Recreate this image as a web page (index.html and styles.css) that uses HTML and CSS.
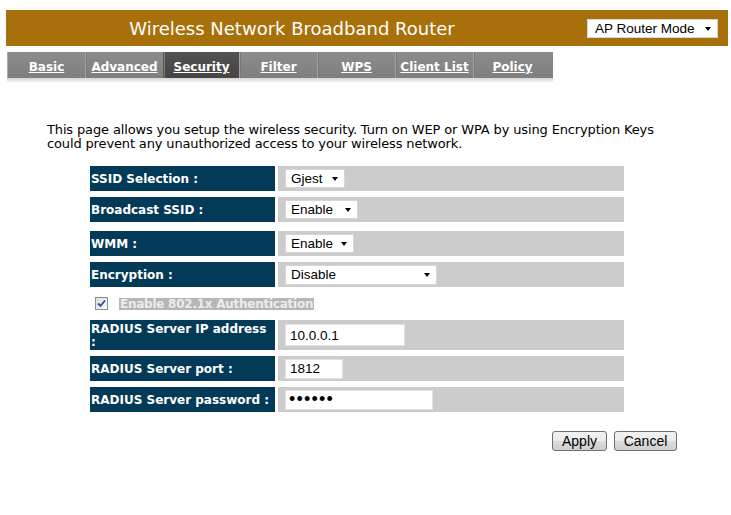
FILE: index.html
```html
<!DOCTYPE html>
<html>
<head lang="en">
    <meta charset="UTF-8">
    <title>Security</title>
    <link rel="stylesheet" href="styles.css">
</head>
<body>
<div class="header">
    <div class="title">Wireless Network Broadband Router</div>
    <div class="sel mode">
        <select>
            <option>AP Router Mode</option>
        </select>
    </div>
</div>
<!--菜单-->
<ul class="tabs">
    <li><a href="#">Basic</a></li>
    <li><a href="#">Advanced</a></li>
    <li class="current"><a href="#">Security</a></li>
    <li><a href="#">Filter</a></li>
    <li><a href="#">WPS</a></li>
    <li><a href="#">Client List</a></li>
    <li><a href="#">Policy</a></li>
</ul>
<div class="tabs-shadow"></div>

<p class="desc">This page allows you setup the wireless security. Turn on WEP or WPA by using Encryption Keys could prevent any unauthorized access to your wireless network.</p>

<div class="form">
    <div class="row">
        <div class="label">SSID Selection :</div>
        <div class="value">
            <div class="sel w60"><select><option>Gjest</option></select></div>
        </div>
    </div>
    <div class="row">
        <div class="label">Broadcast SSID :</div>
        <div class="value">
            <div class="sel w73"><select><option>Enable</option></select></div>
        </div>
    </div>
    <div class="row space">
        <div class="label">WMM :</div>
        <div class="value">
            <div class="sel w69"><select><option>Enable</option></select></div>
        </div>
    </div>
    <div class="row">
        <div class="label">Encryption :</div>
        <div class="value">
            <div class="sel w152 tall"><select><option>Disable</option></select></div>
        </div>
    </div>
    <div class="check-row">
        <span class="cbox">
            <svg width="9" height="9" viewBox="0 0 9 9"><path d="M1 4.5 L3.5 7 L8 1.5" fill="none" stroke="#2b4aa8" stroke-width="1.8"/></svg>
        </span>
        <span class="check-text">Enable 802.1x Authentication</span>
    </div>
    <div class="row big">
        <div class="label">RADIUS Server IP address :</div>
        <div class="value">
            <input class="text w120" type="text" value="10.0.0.1">
        </div>
    </div>
    <div class="row">
        <div class="label">RADIUS Server port :</div>
        <div class="value">
            <input class="text w58" type="text" value="1812">
        </div>
    </div>
    <div class="row">
        <div class="label">RADIUS Server password :</div>
        <div class="value">
            <input class="text pass w148" type="password" value="secret">
        </div>
    </div>
</div>

<div class="actions">
    <button class="btn w55">Apply</button>
    <button class="btn w63">Cancel</button>
</div>
</body>
</html>
```
FILE: styles.css
```css
* {
    margin: 0;
    padding: 0
}

body {
    background-color: #fff;
    font-family: "DejaVu Sans", Verdana, sans-serif;
    font-size: 12px;
    color: #000;
}

ul {
    list-style: none;
}

/* 顶部标题栏 */
.header {
    display: flex;
    align-items: center;
    height: 36px;
    margin: 10px 3px 0 6px;
    background-color: #a8700a;
}

.title {
    width: 572px;
    text-align: center;
    color: #fff;
    font-size: 18px;
}

.header .mode {
    margin-left: 9px;
    width: 131px;
    height: 19px;
}

.header .mode select {
    padding-left: 7px;
}

/* 下拉框 */
.sel {
    position: relative;
    height: 19px;
}

.sel select {
    appearance: none;
    -webkit-appearance: none;
    width: 100%;
    height: 100%;
    padding-left: 5px;
    border: 1px solid #d6d6d6;
    border-radius: 0;
    background-color: #fff;
    font-family: "Liberation Sans", Arial, sans-serif;
    font-size: 13.5px;
    color: #000;
    outline: none;
}

.sel:after {
    content: "";
    position: absolute;
    right: 7px;
    top: 8px;
    border-left: 3.5px solid transparent;
    border-right: 3.5px solid transparent;
    border-top: 4px solid #000;
}

.sel.tall {
    height: 20px;
}

.w60 { width: 60px; }
.w69 { width: 69px; }
.w73 { width: 73px; }
.w152 { width: 152px; }

/* 菜单 */
.tabs {
    display: flex;
    width: 546px;
    height: 26px;
    margin: 6px 0 0 7px;
    background: linear-gradient(#8c8c8c, #7f7f7f);
    border-left: 1px solid #a9a9a9;
    box-sizing: border-box;
}

.tabs li {
    width: 78px;
    text-align: center;
    border-left: 1px solid #a2a2a2;
    box-shadow: inset 1px 0 0 #777;
    box-sizing: border-box;
}

.tabs li:first-child {
    width: 77px;
    border-left: 0;
    box-shadow: none;
}

.tabs li.current {
    width: 76px;
    background: linear-gradient(#525252, #454545);
    border-left-color: #5a5a5a;
}

.tabs a {
    display: block;
    padding-top: 4px;
    line-height: 22px;
    color: #fff;
    font-weight: bold;
    font-size: 12px;
    text-decoration: underline;
}

.tabs-shadow {
    width: 546px;
    height: 4px;
    margin-left: 7px;
    background: linear-gradient(#d6d6d6, #f2f2f2);
}

/* 说明文字 */
.desc {
    width: 630px;
    margin: 41px 0 0 47px;
    font-size: 13px;
    letter-spacing: -0.14px;
    line-height: 14px;
}

/* 表单 */
.form {
    display: flex;
    flex-direction: column;
    gap: 6px;
    width: 534px;
    margin: 15px 0 0 90px;
}

.row {
    display: grid;
    grid-template-columns: 185px 346px;
    column-gap: 3px;
    height: 25px;
}

.row.space {
    margin-top: 3px;
}

.row.big {
    height: 30px;
}

.label {
    display: flex;
    align-items: center;
    padding: 2px 0 0 1px;
    background-color: #033a58;
    color: #fff;
    font-weight: bold;
    line-height: 13px;
}

.value {
    display: flex;
    align-items: center;
    padding-left: 7px;
    background-color: #cccccc;
}

.check-row {
    display: flex;
    align-items: center;
    height: 21px;
    padding-left: 5px;
}

.cbox {
    display: flex;
    align-items: center;
    justify-content: center;
    width: 11px;
    height: 11px;
    border: 1px solid #8e8f8f;
    background: linear-gradient(135deg, #dcdcdc, #fbfbfb);
}

.check-text {
    margin-left: 11px;
    padding: 0 1px;
    line-height: 12px;
    background-color: #b6b6b6;
    color: #ececec;
    font-weight: bold;
    letter-spacing: -0.25px;
}

.text {
    height: 20px;
    padding-left: 4px;
    border: 1px solid #e2e2e2;
    box-sizing: border-box;
    font-family: "Liberation Sans", Arial, sans-serif;
    font-size: 13.5px;
    color: #000;
    outline: none;
}

.text.pass {
    padding: 0 0 0 3px;
    font-size: 18px;
    letter-spacing: 1.2px;
}

.w120 { width: 120px; height: 22px; }
.w58 { width: 58px; }
.w148 { width: 148px; }

/* 按钮 */
.actions {
    display: flex;
    justify-content: flex-end;
    gap: 7px;
    width: 587px;
    margin: 19px 0 0 90px;
}

.btn {
    height: 20px;
    border: 1px solid #707070;
    border-radius: 3px;
    background: linear-gradient(#f2f2f2 0, #ebebeb 50%, #dddddd 51%, #cfcfcf 100%);
    font-family: "Liberation Sans", Arial, sans-serif;
    font-size: 14px;
    color: #000;
}

.w55 { width: 55px; }
.w63 { width: 63px; }
```
